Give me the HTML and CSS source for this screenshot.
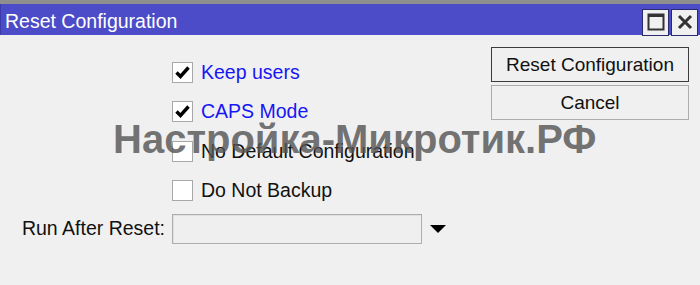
FILE: index.html
```html
<!DOCTYPE html>
<html>
<head>
<meta charset="utf-8">
<link rel="stylesheet" href="styles.css">
</head>
<body>
<div class="window">
  <div class="topstrip"></div>
  <div class="titlebar">
    <span class="title">Reset Configuration</span>
    <div class="winbtns">
      <div class="winbtn"><svg width="18" height="18" viewBox="0 0 18 18"><rect x="1.5" y="1.5" width="15" height="15" fill="none" stroke="#333" stroke-width="2"/><rect x="1" y="1" width="16" height="3" fill="#333"/></svg></div>
      <div class="winbtn"><svg width="16" height="16" viewBox="0 0 16 16"><path d="M2 2 L14 14 M14 2 L2 14" stroke="#333" stroke-width="3"/></svg></div>
    </div>
  </div>
  <div class="content">
    <div class="form">
      <div class="checks">
        <div class="row blue"><span class="box"><svg width="15" height="13" viewBox="0 0 15 13"><path d="M1.5 6.5 L5.5 10.5 L13.5 1.5" fill="none" stroke="#000" stroke-width="3.4"/></svg></span><span>Keep users</span></div>
        <div class="row blue"><span class="box"><svg width="15" height="13" viewBox="0 0 15 13"><path d="M1.5 6.5 L5.5 10.5 L13.5 1.5" fill="none" stroke="#000" stroke-width="3.4"/></svg></span><span>CAPS Mode</span></div>
        <div class="row"><span class="box"></span><span>No Default Configuration</span></div>
        <div class="row"><span class="box"></span><span>Do Not Backup</span></div>
      </div>
      <div class="runrow">
        <span class="label">Run After Reset:</span>
        <div class="combo"></div>
        <span class="arrow"></span>
      </div>
    </div>
    <div class="buttons">
      <div class="btn primary">Reset Configuration</div>
      <div class="btn">Cancel</div>
    </div>
  </div>
  <div class="watermark">Настройка-Микротик.РФ</div>
</div>
</body>
</html>
```
FILE: styles.css
```css
html, body {
  margin: 0;
  padding: 0;
  background: #f0f0f0;
  font-family: "Liberation Sans", Arial, sans-serif;
}
.window {
  position: relative;
  width: 700px;
  height: 285px;
  background: #f0f0f0;
  overflow: hidden;
}
.topstrip {
  height: 4px;
  background: #8f8f8f;
}
.titlebar {
  height: 31px;
  background: #4c4cc9;
  display: flex;
  align-items: center;
  justify-content: space-between;
  border-left: 1px solid #3a3aa8;
  box-sizing: border-box;
}
.title {
  color: #fff;
  font-size: 19.5px;
  padding-left: 4px;
  padding-top: 3px;
}
.winbtns {
  display: flex;
  gap: 2px;
  margin-right: 2px;
  margin-top: 5px;
}
.winbtn {
  width: 25px;
  height: 25px;
  background: #f0f0f0;
  border: 1px solid #2a2a70;
  display: flex;
  align-items: center;
  justify-content: center;
}
.content {
  display: flex;
}
.form {
  flex: 1;
}
.checks {
  padding-left: 172px;
  padding-top: 27px;
  display: flex;
  flex-direction: column;
  gap: 18.3px;
}
.row {
  display: flex;
  align-items: center;
  height: 21px;
  font-size: 19.5px;
  color: #111;
}
.row.blue {
  color: #1616f5;
}
.box {
  width: 19px;
  height: 19px;
  border: 1px solid #a8a8a8;
  background: #fff;
  margin-right: 8px;
  display: flex;
  align-items: center;
  justify-content: center;
  flex: none;
}
.runrow {
  display: flex;
  align-items: center;
  margin-top: 13px;
}
.label {
  width: 165px;
  text-align: right;
  font-size: 19.5px;
  color: #111;
  margin-right: 7px;
}
.combo {
  width: 248px;
  height: 28px;
  border: 1px solid #adadad;
  background: #efefef;
  box-shadow: inset 1px 1px 0 #e0e0e0;
}
.arrow {
  margin-left: 8px;
  width: 0;
  height: 0;
  border-left: 8.5px solid transparent;
  border-right: 8.5px solid transparent;
  border-top: 8px solid #000;
}
.buttons {
  width: 198px;
  margin-right: 11px;
  margin-top: 12px;
  display: flex;
  flex-direction: column;
  gap: 3px;
}
.btn {
  height: 33px;
  border: 1px solid #adadad;
  background: #f0f0f0;
  font-size: 19px;
  color: #111;
  display: flex;
  align-items: center;
  justify-content: center;
}
.btn.primary {
  border-color: #3c3c3c;
}
.watermark {
  position: absolute;
  left: 113px;
  top: 116px;
  font-size: 40px;
  font-weight: bold;
  color: rgba(85, 85, 85, 0.82);
  white-space: nowrap;
  line-height: 46px;
}
```
